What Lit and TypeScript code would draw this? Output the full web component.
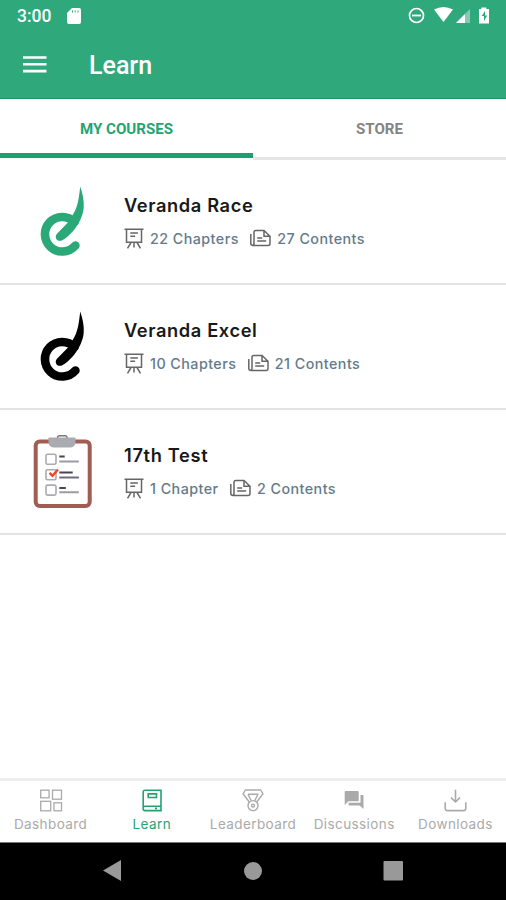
import { LitElement, html, css, svg } from "lit";
import { customElement } from "lit/decorators.js";
import { classMap } from "lit/directives/class-map.js";

interface Course {
  title: string;
  art: "green" | "black" | "clipboard";
  chapters: string;
  contents: string;
}

const courses: Course[] = [
  { title: "Veranda Race", art: "green", chapters: "22 Chapters", contents: "27 Contents" },
  { title: "Veranda Excel", art: "black", chapters: "10 Chapters", contents: "21 Contents" },
  { title: "17th Test", art: "clipboard", chapters: "1 Chapter", contents: "2 Contents" },
];

const brandMark = svg`
  <path d="M74.500 57A17.300 17.300 0 1 0 75.400 80.500" fill="none" stroke="currentColor" stroke-width="8.600" stroke-linecap="round"/>
  <path d="M80.200 21.500C82.500 28 84.300 36 83.700 43C82.500 56 72 70 62.300 75.300C57.500 77.500 53.500 72.500 57.200 68.500L69 56.500L73 49.500C78 42 79 32 80.200 21.500Z" fill="currentColor"/>`;

const clipboard = svg`<g transform="translate(0 4.300)">
  <rect x="35.700" y="22.200" width="54" height="64.500" rx="4" fill="#fff" stroke="#a15d51" stroke-width="4"/>
  <path d="M57.500 20v-1.500a2 2 0 0 1 2-2h5.500a2 2 0 0 1 2 2V20" fill="none" stroke="#77787c" stroke-width="1.400"/>
  <path d="M48.500 19q0-.8 1-.8h25q1 0 1 .8v3.500q0 5-5 5.800H53.500q-5-.8-5-5.800z" fill="#a9abb0"/>
  <g fill="#fff" stroke="#aaabaf" stroke-width="1.600">
    <rect x="46" y="35" width="10" height="10" rx="1.500"/>
    <rect x="46" y="50.500" width="10" height="10" rx="1.500"/>
    <rect x="46" y="65.800" width="10" height="10" rx="1.500"/>
  </g>
  <path d="M49.500 53.500l3 3 5.500-6.300" fill="none" stroke="#ee4726" stroke-width="2.400"/>
  <path d="M59.300 37.200h5.400M59.300 53.200h13.400M59.300 68.700h6.500" stroke="#484456" stroke-width="1.800"/>
  <path d="M59.300 42.200h19.500M59.300 73h19.500" stroke="#9b9ca3" stroke-width="2"/>
  <path d="M59.300 58.200h19.500" stroke="#6d6b7a" stroke-width="2"/></g>`;

const boardIcon = html`<svg class="board" width="20" height="22" viewBox="0 0 20 22" fill="none" stroke="#666" stroke-width="1.500">
  <path d="M.5 2.200h19M2.500 2.200v13.100h15V2.200M6.300 6h7.600M6.300 9.200h4.800M10 15.300v5.200M7 15.500l-3.500 5.800M13 15.500l3.500 5.800"/>
</svg>`;

const paperIcon = html`<svg class="paper" width="21" height="18" viewBox="0 0 21 18" fill="none" stroke="#666" stroke-width="1.500">
  <path d="M4 3.300q0-1.800 1.800-1.800H14l6 5.800v7.200q0 2-2 2H3.300Q.8 16.500.8 14.500V5.100M4 3v11.300q0 2.200-1.500 2.200M14 1.500v5.800h6M7.200 9h5M7.200 12.100h9"/>
</svg>`;

const navItems = [
  {
    label: "Dashboard", name: "dashboard",
    icon: svg`<g fill="none" stroke="currentColor" stroke-width="1.300"><rect x="1.700" y="2.200" width="8.400" height="7.600"/><rect x="13.500" y="2.200" width="9" height="9"/><rect x="1.700" y="13.300" width="10" height="9.500"/><rect x="15" y="14.800" width="7.500" height="8"/></g>`,
  },
  {
    label: "Learn", name: "learn",
    icon: svg`<path d="M5 2.200h16v20.400H5a1.800 1.800 0 0 1-1.800-1.800V4A1.800 1.800 0 0 1 5 2.200zM3.200 19.900q0-1.700 1.800-1.700h16M8.200 5.900h8.300v3.600H8.200zM15 20.400h2" fill="none" stroke="currentColor" stroke-width="1.600"/>`,
  },
  {
    label: "Leaderboard", name: "leaderboard",
    icon: svg`<g fill="none" stroke="currentColor" stroke-width="1.400" stroke-linejoin="round"><path d="M8.300 14L2 5.800 4.300 2h15.400L22 5.800 15.700 14M7 6.200h10L13.800 12.500M7 6.200l3.200 6.300"/><circle cx="12" cy="17.600" r="5"/><circle cx="12" cy="17.600" r="1.500"/></g>`,
  },
  {
    label: "Discussions", name: "discussions",
    icon: svg`<path d="M3.700 3h12q1 0 1 1v8.300q0 1-1 1H6.500L2.700 17V4q0-1 1-1zM18.500 7h2q1 0 1 1v13l-3.800-3.500H7.500q-1 0-1-1v-1.700h12z" fill="currentColor"/>`,
  },
  {
    label: "Downloads", name: "downloads",
    icon: svg`<path d="M12.500 1.800v12M8 9.600l4.500 4.400 4.500-4.400M2.200 14.300v6q0 2.300 2.300 2.300h16q2.300 0 2.300-2.300v-6" fill="none" stroke="currentColor" stroke-width="1.600"/>`,
  },
];

@customElement("app-root")
export class AppRoot extends LitElement {
  static styles = css`
    :host { display: flex; flex-direction: column; height: 900px; background: #fff; font-family: Inter, sans-serif; overflow: hidden; }
    * { box-sizing: border-box; }
    svg { display: block; flex: none; }
    .header { height: 99px; background: #2fa97c; border-bottom: 1px solid #189467; color: #fff; font-family: Roboto, sans-serif; flex: none; }
    .status { height: 32px; display: flex; align-items: center; justify-content: space-between; padding-left: 17px; }
    .time { display: flex; align-items: center; font-size: 17.500px; font-weight: 500; gap: 16px; }
    .toolbar { height: 66px; display: flex; align-items: center; padding-left: 22px; gap: 42px; font-size: 25px; font-weight: 500; }
    .tabs { height: 61px; display: flex; flex: none; font-family: Roboto, sans-serif; font-size: 15.100px; font-weight: 700; }
    .tab { flex: 1; display: flex; align-items: center; justify-content: center; color: #848484; border-bottom: 3px solid #e5e5e5; padding-top: 2px; }
    .tab.active { color: #1fa474; border-bottom: 5px solid #1d9f70; height: 59px; padding-top: 6px; }
    .course { height: 125px; display: flex; border-bottom: 2px solid #e3e3e3; }
    .art { width: 124px; height: 110px; }
    .green { color: #2aa877; }
    .black { color: #000; }
    .body { padding-top: 32px; }
    .title { height: 26px; line-height: 26px; font-size: 18.300px; font-weight: 600; color: #191919; white-space: nowrap; }
    .green-title, .black-title { letter-spacing: .6px; }
    .clipboard-title { letter-spacing: .65px; }
    .meta { display: flex; align-items: center; height: 24px; margin-top: 8px; color: #647b8b; font-size: 14.300px; font-weight: 500; letter-spacing: .45px; white-space: nowrap; }
    .board { margin-right: 6px; }
    .paper { margin: 0 6px 0 11.500px; }
    .bottom { margin-top: auto; height: 64px; border-top: 3px solid #eee; display: grid; grid-template-columns: repeat(5, 1fr); flex: none; }
    .item { display: flex; flex-direction: column; align-items: center; color: #aaa; font-size: 13.500px; padding-top: 7px; white-space: nowrap; letter-spacing: .4px; }
    .item span { line-height: 20px; margin-top: 2px; }
    .item.active { color: #1fa474; }
    .system { height: 58px; background: #000; border-top: 1px solid #777; flex: none; display: grid; grid-template-columns: 182px 142px 138px; padding-bottom: 2px; }
    .system svg { justify-self: center; align-self: center; }
  `;

  render() {
    return html`
      <header class="header">
        <div class="status">
          <div class="time"><span>3:00</span><svg width="14" height="16" viewBox="0 0 14 16"><path d="M5 0h7q2 0 2 2v12q0 2-2 2H2q-2 0-2-2V5z" fill="#fff"/><path d="M5.500 2.500v2M8.200 2.500v2M11 2.500v2" stroke="#2fa97c" stroke-width="1"/></svg></div>
          <svg width="98" height="32" viewBox="408 0 98 32"><circle cx="416.500" cy="15.500" r="7" fill="none" stroke="#fff" stroke-width="1.700"/><path d="M412 15.500h9" stroke="#fff" stroke-width="1.800"/><path d="M434 9.500q9.500-5 19 0L443.500 22z" fill="#fff"/><path d="M456 23L470 9v14z" fill="#fff" opacity=".4"/><path d="M456 23l9-9v9z" fill="#fff"/><path d="M479 9h2.300V7.500h5V9h2.700v14.500h-10z" fill="#fff"/><path d="M485 11l-3.300 5h2.300v5l3.200-5.500H485z" fill="#2fa97c"/></svg>
        </div>
        <div class="toolbar"><svg width="25" height="18" viewBox="0 0 25 18"><path d="M1 1.500h23.500M1 8.300h23.500M1 15.100h23.500" stroke="#fff" stroke-width="2.600"/></svg><span>Learn</span></div>
      </header>
      <nav class="tabs"><div class="tab active">MY COURSES</div><div class="tab">STORE</div></nav>
      <main>
        ${courses.map((c) => html`
          <article class="course">
            <svg class="art ${c.art}" viewBox="0 -5 124 110">${c.art === "clipboard" ? clipboard : brandMark}</svg>
            <div class="body">
              <div class="title ${c.art}-title">${c.title}</div>
              <div class="meta">${boardIcon}<span>${c.chapters}</span>${paperIcon}<span>${c.contents}</span></div>
            </div>
          </article>`)}
      </main>
      <nav class="bottom">
        ${navItems.map((n) => html`<div class=${classMap({ item: true, active: n.name === "learn", [n.name]: true })}><svg width="24" height="24" viewBox="0 0 24 24">${n.icon}</svg><span>${n.label}</span></div>`)}
      </nav>
      <footer class="system">
        <svg width="182" height="55" viewBox="0 0 182 55"><path d="M103 27.500l18-10.500v21z" fill="#999"/></svg>
        <svg width="18" height="18" viewBox="0 0 18 18"><circle cx="9" cy="9" r="9" fill="#999"/></svg>
        <svg width="20" height="20" viewBox="0 0 20 20"><rect x=".5" width="19.500" height="19.500" rx="1" fill="#999"/></svg>
      </footer>`;
  }
}
